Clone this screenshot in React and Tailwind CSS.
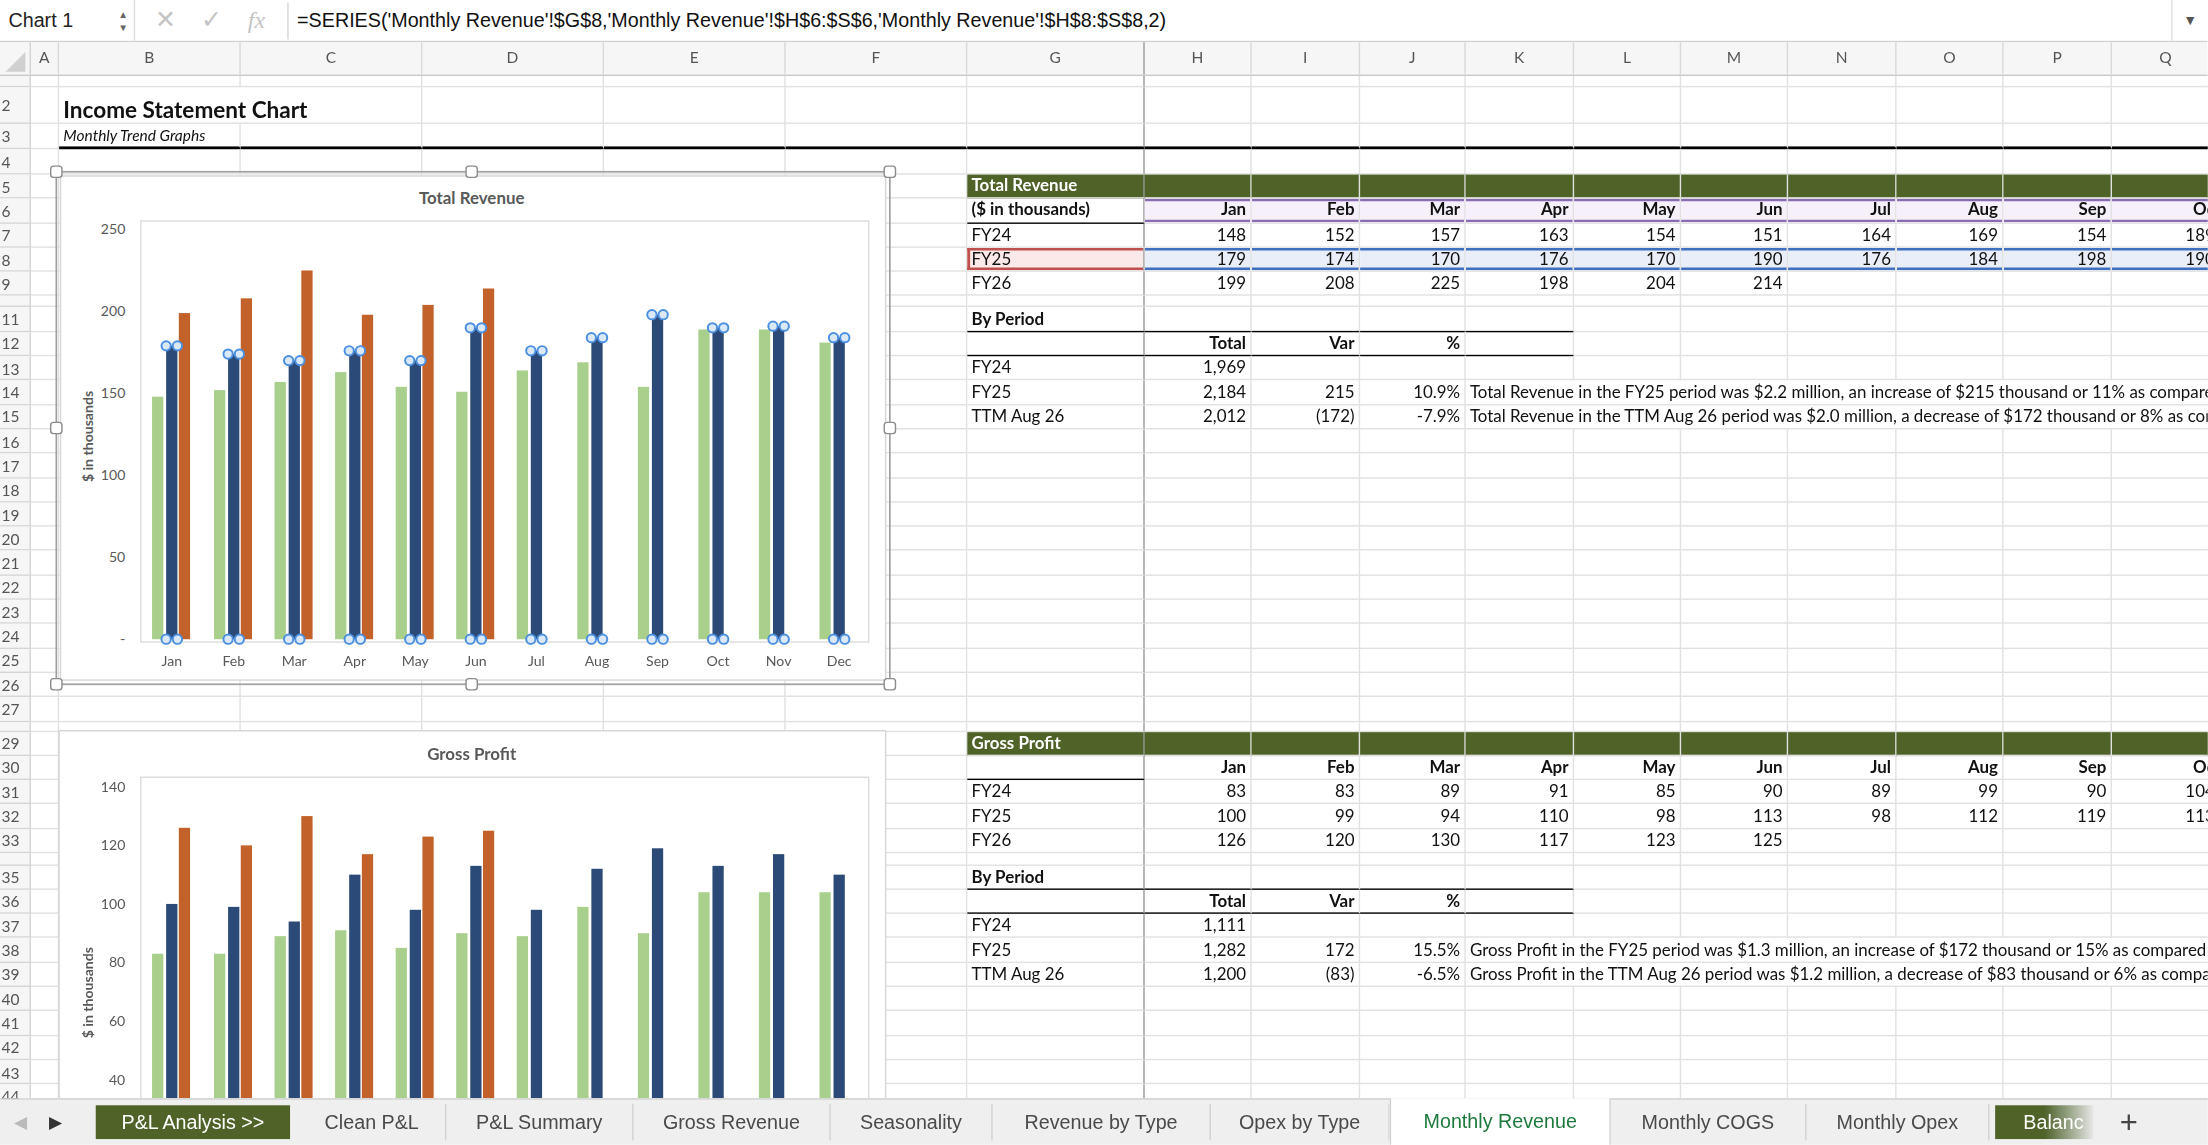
import React from "react";

const COLS = [
  ["A", "w-[20px]", 20], ["B", "w-[129px]", 129], ["C", "w-[129px]", 129], ["D", "w-[129px]", 129],
  ["E", "w-[129px]", 129], ["F", "w-[129px]", 129], ["G", "w-[126px]", 126], ["H", "w-[76px]", 76],
  ["I", "w-[77px]", 77], ["J", "w-[75px]", 75], ["K", "w-[77px]", 77], ["L", "w-[76px]", 76],
  ["M", "w-[76px]", 76], ["N", "w-[77px]", 77], ["O", "w-[76px]", 76], ["P", "w-[77px]", 77], ["Q", "w-[77px]", 77],
];
const MCOLS = ["H", "I", "J", "K", "L", "M", "N", "O", "P", "Q"];
const MONTHS = ["Jan", "Feb", "Mar", "Apr", "May", "Jun", "Jul", "Aug", "Sep", "Oc"];
const GREEN = "bg-[#4f6228] text-white font-bold";
const NUM = "text-right";

function monthRow(vals, extra = "") {
  const o = {};
  MCOLS.forEach((c, i) => { if (vals[i] !== undefined) o[c] = { t: String(vals[i]), c: NUM + " " + extra }; else if (extra) o[c] = { t: "", c: extra }; });
  return o;
}
function band(title) {
  const o = { G: { t: title, c: GREEN } };
  MCOLS.forEach((c) => (o[c] = { t: "", c: GREEN }));
  return o;
}
const BLK = "border-b-[1.5px] border-b-black";

const purple = "bg-[#f5f0fa] shadow-[inset_0_2px_0_#8a6cb5,inset_0_-2px_0_#8a6cb5] font-bold text-right";
const blue = "bg-[#e9eef8] shadow-[inset_0_2px_0_#3f6fbf,inset_0_-2px_0_#3f6fbf] text-right";

const R = [];
const add = (n, h, cells = {}) => R.push({ n, h, cells });
add(1, "h-[8px]");
add(2, "h-[26px]", { B: { t: "Income Statement Chart", c: "font-bold text-[16px] pt-[6px]", span: 2 } });
const thick = "border-b-2 border-b-black";
const r3 = { B: { t: "Monthly Trend Graphs", c: "italic text-[11px] " + thick } };
["C", "D", "E", "F", "G", ...MCOLS].forEach((c) => (r3[c] = { t: "", c: thick }));
add(3, "h-[18px]", r3);
add(4, "h-[18px]");
add(5, "h-[17.3px]", band("Total Revenue"));
add(6, "h-[17.3px]", { G: { t: "($ in thousands)", c: "font-bold " + BLK }, ...monthRow(MONTHS, purple) });
add(7, "h-[17.3px]", { G: { t: "FY24" }, ...monthRow([148, 152, 157, 163, 154, 151, 164, 169, 154, 189]) });
add(8, "h-[17.3px]", { G: { t: "FY25", c: "bg-[#fbe9e9] shadow-[inset_0_2px_0_#c0504d,inset_0_-2px_0_#c0504d,inset_2px_0_0_#c0504d]" }, ...monthRow([179, 174, 170, 176, 170, 190, 176, 184, 198, 190], blue) });
add(9, "h-[17.3px]", { G: { t: "FY26" }, ...monthRow([199, 208, 225, 198, 204, 214]) });
add(10, "h-[8px]");
const bp = () => ({ G: { t: "By Period", c: "font-bold " + BLK }, H: { t: "", c: BLK }, I: { t: "", c: BLK }, J: { t: "", c: BLK }, K: { t: "", c: BLK } });
const tv = () => ({ G: { t: "", c: BLK }, H: { t: "Total", c: "font-bold text-right " + BLK }, I: { t: "Var", c: "font-bold text-right " + BLK }, J: { t: "%", c: "font-bold text-right " + BLK }, K: { t: "", c: BLK } });
add(11, "h-[17.3px]", bp());
add(12, "h-[17.3px]", tv());
add(13, "h-[17.3px]", { G: { t: "FY24" }, H: { t: "1,969", c: NUM } });
add(14, "h-[17.3px]", { G: { t: "FY25" }, H: { t: "2,184", c: NUM }, I: { t: "215", c: NUM }, J: { t: "10.9%", c: NUM }, K: { t: "Total Revenue in the FY25 period was $2.2 million, an increase of $215 thousand or 11% as compared with FY24", span: 7 } });
add(15, "h-[17.3px]", { G: { t: "TTM Aug 26" }, H: { t: "2,012", c: NUM }, I: { t: "(172)", c: NUM }, J: { t: "-7.9%", c: NUM }, K: { t: "Total Revenue in the TTM Aug 26 period was $2.0 million, a decrease of $172 thousand or 8% as compared with FY25", span: 7 } });
for (let n = 16; n <= 27; n++) add(n, "h-[17.3px]");
add(28, "h-[7px]");
add(29, "h-[17.3px]", band("Gross Profit"));
add(30, "h-[17.3px]", { G: { t: "", c: BLK }, ...monthRow(MONTHS, "font-bold") });
add(31, "h-[17.3px]", { G: { t: "FY24" }, ...monthRow([83, 83, 89, 91, 85, 90, 89, 99, 90, 104]) });
add(32, "h-[17.3px]", { G: { t: "FY25" }, ...monthRow([100, 99, 94, 110, 98, 113, 98, 112, 119, 113]) });
add(33, "h-[17.3px]", { G: { t: "FY26" }, ...monthRow([126, 120, 130, 117, 123, 125]) });
add(34, "h-[8.5px]");
add(35, "h-[17.3px]", bp());
add(36, "h-[17.3px]", tv());
add(37, "h-[17.3px]", { G: { t: "FY24" }, H: { t: "1,111", c: NUM } });
add(38, "h-[17.3px]", { G: { t: "FY25" }, H: { t: "1,282", c: NUM }, I: { t: "172", c: NUM }, J: { t: "15.5%", c: NUM }, K: { t: "Gross Profit in the FY25 period was $1.3 million, an increase of $172 thousand or 15% as compared with FY24", span: 7 } });
add(39, "h-[17.3px]", { G: { t: "TTM Aug 26" }, H: { t: "1,200", c: NUM }, I: { t: "(83)", c: NUM }, J: { t: "-6.5%", c: NUM }, K: { t: "Gross Profit in the TTM Aug 26 period was $1.2 million, a decrease of $83 thousand or 6% as compared with FY25", span: 7 } });
for (let n = 40; n <= 46; n++) add(n, "h-[17.3px]");

function Row({ r }) {
  const out = [];
  for (let i = 0; i < COLS.length; i++) {
    const [k, wc, w] = COLS[i];
    const cell = r.cells[k] || {};
    let width = w;
    if (cell.span) {
      for (let j = 1; j < cell.span && i + j < COLS.length; j++) width += COLS[i + j][2];
    }
    out.push(
      <div
        key={k}
        style={cell.span ? { width } : undefined}
        className={`${cell.span ? "" : wc} shrink-0 h-full border-r border-b border-[#e1e1e1] px-[3px] flex items-center whitespace-nowrap overflow-hidden ${k === "G" ? "border-r-[#9a9a9a]" : ""} ${cell.c || ""}`}
      >
        <span className={`${cell.c && cell.c.includes("text-right") ? "ml-auto" : ""}`}>{cell.t}</span>
      </div>
    );
    if (cell.span) i += cell.span - 1;
  }
  return (
    <div className={`flex ${r.h} text-[12px] text-[#111]`}>
      <div className="w-[22px] shrink-0 h-full bg-[#f6f6f6] border-r border-b border-[#d4d4d4] text-[11px] text-[#555] flex items-center overflow-hidden leading-none pl-[1px]">
        {r.h === "h-[8px]" || r.h === "h-[7px]" || r.h === "h-[8.5px]" ? "" : r.n}
      </div>
      {out}
    </div>
  );
}

const XC = [121, 165, 208, 251, 294, 337, 380, 423, 466, 509, 552, 595];
const XL = ["Jan", "Feb", "Mar", "Apr", "May", "Jun", "Jul", "Aug", "Sep", "Oct", "Nov", "Dec"];
const REV = [
  [148, 152, 157, 163, 154, 151, 164, 169, 154, 189, 189, 181],
  [179, 174, 170, 176, 170, 190, 176, 184, 198, 190, 191, 184],
  [199, 208, 225, 198, 204, 214],
];
const GP = [
  [83, 83, 89, 91, 85, 90, 89, 99, 90, 104, 104, 104],
  [100, 99, 94, 110, 98, 113, 98, 112, 119, 113, 117, 110],
  [126, 120, 130, 117, 123, 125],
];
const CG = "#a9cf8c", CB = "#2c4a77", CO = "#c2622a";

function Bars({ data, y0, k, markers }) {
  const els = [];
  XC.forEach((c, i) => {
    const g = data[0][i], b = data[1][i], o = data[2][i];
    els.push(<rect key={"g" + i} x={c - 13} y={y0 - g * k} width={8} height={g * k} fill={CG} />);
    els.push(<rect key={"b" + i} x={c - 3} y={y0 - b * k} width={8} height={b * k} fill={CB} />);
    if (o !== undefined) els.push(<rect key={"o" + i} x={c + 6} y={y0 - o * k} width={8} height={o * k} fill={CO} />);
    if (markers) {
      [[c - 3, y0 - b * k], [c + 5, y0 - b * k], [c - 3, y0], [c + 5, y0]].forEach(([x, y], j) =>
        els.push(<circle key={"m" + i + j} cx={x} cy={y} r={3.3} fill="#dbe8f8" stroke="#4a8fe0" strokeWidth={1.4} />)
      );
    }
  });
  return <g>{els}</g>;
}

function Charts() {
  const font = { fontFamily: "Lato, 'Open Sans', sans-serif" };
  const handles = [[40, 122], [335, 122], [632, 122], [40, 304], [632, 304], [40, 486], [335, 486], [632, 486]];
  return (
    <svg className="absolute left-0 top-0 pointer-events-none" width="1568" height="726" viewBox="0 54 1568 726" style={font}>
      <rect x="40" y="122" width="592" height="364" fill="none" stroke="#a0a0a0" strokeWidth="1.2" />
      <rect x="43" y="125" width="586" height="358" fill="#fff" stroke="#d6d6d6" />
      {handles.map(([x, y], i) => (
        <rect key={i} x={x - 4} y={y - 4} width="8" height="8" rx="2" fill="#fff" stroke="#8c8c8c" />
      ))}
      <text x="335" y="145" textAnchor="middle" fontSize="12" fontWeight="700" fill="#595959">Total Revenue</text>
      <rect x="100" y="157" width="517" height="299" fill="none" stroke="#dcdcdc" />
      {[[250, "250"], [200, "200"], [150, "150"], [100, "100"], [50, "50"], [0, "-"]].map(([v, l]) => (
        <text key={l} x="89" y={454 - v * 1.164 + 3.5} textAnchor="end" fontSize="10" fill="#595959">{l}</text>
      ))}
      <text transform="translate(66,310) rotate(-90)" textAnchor="middle" fontSize="10" fontWeight="700" fill="#595959">$ in thousands</text>
      <Bars data={REV} y0={454} k={1.164} markers />
      {XC.map((c, i) => (
        <text key={i} x={c + 1} y="473" textAnchor="middle" fontSize="10" fill="#595959">{XL[i]}</text>
      ))}
      <rect x="42" y="519" width="587" height="320" fill="#fff" stroke="#d6d6d6" />
      <text x="335" y="540" textAnchor="middle" fontSize="12" fontWeight="700" fill="#595959">Gross Profit</text>
      <rect x="100" y="552" width="517" height="300" fill="none" stroke="#dcdcdc" />
      {[140, 120, 100, 80, 60, 40].map((v) => (
        <text key={v} x="89" y={850 - v * 2.08 + 3.5} textAnchor="end" fontSize="10" fill="#595959">{v}</text>
      ))}
      <text transform="translate(66,705) rotate(-90)" textAnchor="middle" fontSize="10" fontWeight="700" fill="#595959">$ in thousands</text>
      <Bars data={GP} y0={850} k={2.08} />
    </svg>
  );
}

const TABS = [
  ["P&L Analysis >>", "w-[138px]", "green"],
  ["Clean P&L", "w-[105px]"],
  ["P&L Summary", "w-[133px]"],
  ["Gross Revenue", "w-[140px]"],
  ["Seasonality", "w-[115px]"],
  ["Revenue by Type", "w-[155px]"],
  ["Opex by Type", "w-[127px]"],
  ["Monthly Revenue", "w-[157px]", "active"],
  ["Monthly COGS", "w-[139px]"],
  ["Monthly Opex", "w-[130px]"],
];

export default function App() {
  return (
    <div className="w-[2208px] h-[1145px] overflow-hidden bg-white">
      <div className="w-[1568px] h-[813px] origin-top-left scale-[1.408] flex flex-col overflow-hidden" style={{ fontFamily: "Lato, 'Open Sans', sans-serif" }}>
        <div className="h-[30px] shrink-0 flex items-center border-b border-[#cfcfcf] bg-white" style={{ fontFamily: "'Liberation Sans', Arial, sans-serif" }}>
          <div className="w-[96px] h-full flex items-center justify-between pl-[6px] pr-[4px] border-r border-[#dedede]">
            <span className="text-[14px] text-[#222]">Chart 1</span>
            <span className="flex flex-col text-[7px] leading-[9px] text-[#666]"><span>▲</span><span>▼</span></span>
          </div>
          <div className="w-[108px] h-full flex items-center gap-[18px] pl-[14px] text-[#c4c4c4] text-[18px]">
            <span>✕</span><span>✓</span><span className="italic text-[17px]" style={{ fontFamily: "'Liberation Serif', serif" }}>fx</span>
          </div>
          <div className="flex-1 h-[26px] border-l border-[#d6d6d6] flex items-center pl-[6px] text-[14px] text-[#111] whitespace-nowrap">
            =SERIES('Monthly Revenue'!$G$8,'Monthly Revenue'!$H$6:$S$6,'Monthly Revenue'!$H$8:$S$8,2)
          </div>
          <div className="w-[26px] h-full flex items-center justify-center border-l border-[#e2e2e2] text-[10px] text-[#555]">▼</div>
        </div>
        <div className="h-[24px] shrink-0 flex bg-[#f6f6f6] border-b border-[#c9c9c9] text-[11px] text-[#555]">
          <div className="w-[22px] shrink-0 border-r border-[#d4d4d4] flex items-end">
            <svg width="20" height="20" viewBox="0 0 20 20"><polygon points="18,4 18,18 4,18" fill="#d0d0d0" /></svg>
          </div>
          {COLS.map(([k, wc]) => (
            <div key={k} className={`${wc} shrink-0 border-r border-[#d9d9d9] flex items-center justify-center ${k === "G" ? "border-r-[#9a9a9a]" : ""}`}>{k}</div>
          ))}
        </div>
        <div className="flex-1 relative overflow-hidden">
          {R.map((r) => <Row key={r.n} r={r} />)}
          <Charts />
        </div>
        <div className="h-[33px] shrink-0 flex items-stretch bg-[#efefef] border-t border-[#d0d0d0] text-[14px] text-[#4a4a4a]" style={{ fontFamily: "'Liberation Sans', Arial, sans-serif" }}>
          <div className="w-[68px] flex items-center gap-[16px] pl-[10px] text-[12px]">
            <span className="text-[#bbb]">◀</span><span className="text-[#333]">▶</span>
          </div>
          {TABS.map(([t, w, kind]) => (
            <div
              key={t}
              className={`${w} flex items-center justify-center whitespace-nowrap ${
                kind === "green"
                  ? "bg-[#4f6228] text-white my-[4px] mr-[6px]"
                  : kind === "active"
                  ? "bg-white text-[#1e7a3c] -mt-[1px] border-x border-[#d0d0d0] shadow-[0_2px_0_#fff]"
                  : "border-r border-[#d2d2d2] my-[3px]"
              }`}
            >
              {t}
            </div>
          ))}
          <div className="w-[70px] ml-[4px] my-[4px] bg-gradient-to-r from-[#4f6228] via-[#4f6228] to-[#e9e9e9] text-white flex items-center pl-[20px] overflow-hidden whitespace-nowrap">Balanc</div>
          <div className="w-[50px] flex items-center justify-center text-[22px] text-[#444]">+</div>
        </div>
      </div>
    </div>
  );
}
